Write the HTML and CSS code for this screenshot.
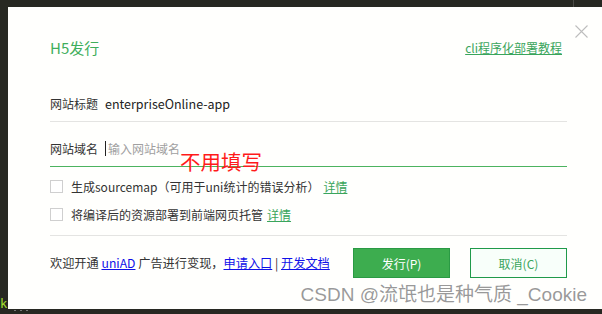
FILE: index.html
```html
<!DOCTYPE html>
<html>
<head>
<meta charset="utf-8">
<link rel="stylesheet" href="styles.css">
</head>
<body>
<div class="screen">
  <div class="topbar"><span class="topline"></span></div>
  <div class="middle">
    <div class="editor-strip"></div>
    <div class="dialog">
      <span class="close" aria-label="关闭">
        <svg width="13" height="13" viewBox="0 0 13 13"><path d="M0.5 0.5L12.5 12.5M12.5 0.5L0.5 12.5" stroke="#bdbdbd" stroke-width="1.1" fill="none"/></svg>
      </span>
      <div class="header">
        <div class="title">H5发行</div>
        <a class="cli-link">cli程序化部署教程</a>
      </div>
      <div class="row row-title">
        <span class="label">网站标题</span>
        <span class="value">enterpriseOnline-app</span>
      </div>
      <div class="row row-domain">
        <span class="label">网站域名</span>
        <span class="input"><span class="caret"></span><span class="placeholder">输入网站域名</span></span>
      </div>
      <div class="checks">
        <div class="check-row"><span class="box"></span><span class="check-text">生成sourcemap（可用于uni统计的错误分析）</span><a class="green-link">详情</a></div>
        <div class="check-row"><span class="box"></span><span class="check-text">将编译后的资源部署到前端网页托管</span><a class="green-link tight">详情</a></div>
      </div>
      <div class="footer">
        <div class="promo">欢迎开通 <a class="blue">uniAD</a> 广告进行变现，<a class="blue">申请入口</a> | <a class="blue">开发文档</a></div>
        <div class="buttons">
          <button class="btn primary">发行(P)</button>
          <button class="btn ghost">取消(C)</button>
        </div>
      </div>
    </div>
  </div>
  <div class="bottombar"><span class="dots"></span></div>
  <span class="note">不用填写</span>
  <span class="watermark">CSDN @流氓也是种气质 _Cookie</span>
  <span class="tk">k</span>
</div>
</body>
</html>
```

FILE: styles.css
```css
html, body {
  margin: 0;
  padding: 0;
  background: #272822;
}
body {
  font-family: "Noto Sans CJK SC", "Noto Sans", sans-serif;
  font-size: 12px;
  color: #333;
}
.screen {
  position: relative;
  width: 602px;
  height: 314px;
  overflow: hidden;
  display: flex;
  flex-direction: column;
}
.topbar {
  height: 7px;
  position: relative;
  flex: none;
}
.topline {
  position: absolute;
  left: 573px;
  top: 0;
  width: 1px;
  height: 7px;
  background: #4a4a46;
}
.middle {
  display: flex;
  height: 302px;
  flex: none;
}
.editor-strip {
  width: 8px;
  flex: none;
  background: #272822;
}
.dialog {
  position: relative;
  flex: 1;
  background: #fffffd;
  padding: 0 35px 0 42px;
  box-sizing: border-box;
}
.close {
  position: absolute;
  left: 567px;
  top: 18px;
  width: 13px;
  height: 13px;
  display: block;
}
.close svg { display: block; }
.header {
  margin-top: 31px;
  height: 20px;
  display: flex;
  align-items: center;
  justify-content: space-between;
}
.title {
  font-size: 15px;
  color: #3fae5c;
  line-height: 20px;
}
.cli-link {
  color: #3aa55c;
  text-decoration: underline;
  font-size: 12px;
  line-height: 20px;
  margin-right: 5px;
}
.row {
  display: flex;
  align-items: center;
  height: 36px;
}
.row-title {
  margin-top: 27px;
  border-bottom: 1px solid #e4e4e2;
}
.row-domain {
  margin-top: 9px;
  height: 35px;
  border-bottom: 1px solid #4cb35f;
}
.label {
  width: 55px;
  flex: none;
  color: #333;
}
.value {
  color: #222;
  font-size: 12.5px;
}
.input {
  display: flex;
  align-items: center;
}
.caret {
  width: 1px;
  height: 15px;
  background: #222;
  margin-right: 2px;
}
.placeholder {
  color: #a0a0a0;
}
.checks {
  padding-top: 5px;
  padding-bottom: 7px;
  border-bottom: 1px solid #e4e4e2;
}
.check-row {
  display: flex;
  align-items: center;
  height: 28px;
}
.box {
  width: 11px;
  height: 11px;
  border: 1px solid #cfcfcf;
  background: #fff;
  margin-right: 8px;
  flex: none;
}
.check-text {
  color: #333;
}
.green-link {
  color: #3aa55c;
  text-decoration: underline;
  margin-left: 4px;
}
.green-link.tight {
  margin-left: 4px;
}
.footer {
  display: flex;
  align-items: center;
  justify-content: space-between;
  margin-top: 12px;
  height: 30px;
}
.promo {
  color: #333;
  font-size: 12.2px;
}
.blue {
  color: #1010e8;
  text-decoration: underline;
}
.buttons {
  display: flex;
  gap: 20px;
}
.btn {
  width: 97px;
  height: 30px;
  font-family: "Noto Sans CJK SC", "Noto Sans", sans-serif;
  font-size: 12px;
  box-sizing: border-box;
  padding: 0;
}
.primary {
  background: #3dad4f;
  border: 1px solid #2a9a44;
  color: #fff;
}
.ghost {
  background: #f8fffa;
  border: 1px solid #1f9a4a;
  color: #3aa55c;
}
.bottombar {
  flex: 1;
  position: relative;
}
.dots {
  position: absolute;
  left: 14px;
  top: 1px;
  width: 16px;
  height: 1px;
  background: repeating-linear-gradient(90deg, #777 0 2px, transparent 2px 6px);
}
.note {
  position: absolute;
  left: 180px;
  top: 149px;
  font-size: 20.5px;
  line-height: 24px;
  color: #ff1a1a;
}
.watermark {
  position: absolute;
  right: 15px;
  top: 282px;
  font-family: "Liberation Sans", "Noto Sans CJK SC", sans-serif;
  font-size: 19px;
  line-height: 26px;
  color: rgba(125, 125, 125, 0.78);
}
.tk {
  position: absolute;
  left: 0;
  top: 297px;
  font-family: "DejaVu Sans Mono", monospace;
  font-size: 12px;
  line-height: 14px;
  color: #a6e22e;
  width: 8px;
  overflow: hidden;
}
```
